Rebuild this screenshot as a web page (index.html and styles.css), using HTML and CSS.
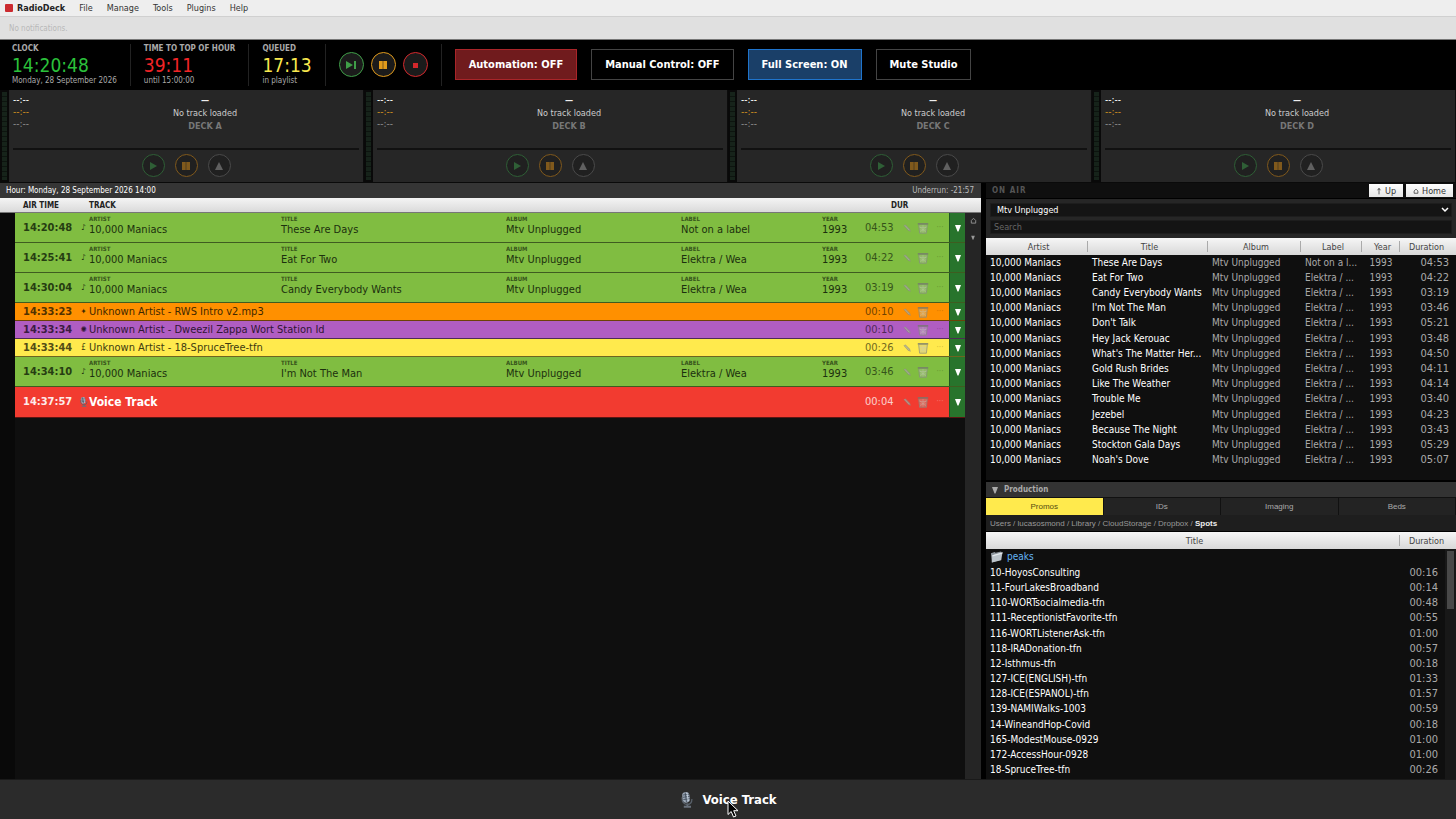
FILE: index.html
```html
<!DOCTYPE html>
<html lang="en">
<head>
<meta charset="utf-8">
<title>RadioDeck</title>
<meta name="viewport" content="width=device-width, initial-scale=1">
<link rel="stylesheet" href="styles.css">
</head>
<body>
<svg class="sprite" aria-hidden="true">
  <defs>
    <symbol id="i-next" viewBox="0 0 12 12"><path d="M1 2l7 4-7 4zM9 2h2v8H9z" fill="currentColor"/></symbol>
    <symbol id="i-play" viewBox="0 0 12 12"><path d="M3 2l7 4-7 4z" fill="currentColor"/></symbol>
    <symbol id="i-pause" viewBox="0 0 12 12"><path d="M2 2h8v8H2z" fill="currentColor" opacity=".75"/><path d="M2 2h3v8H2zM7 2h3v8H7z" fill="currentColor"/></symbol>
    <symbol id="i-stop" viewBox="0 0 12 12"><path d="M4 4h5v5H4z" fill="currentColor"/></symbol>
    <symbol id="i-eject" viewBox="0 0 12 12"><path d="M6 2l4 8H2z" fill="currentColor"/></symbol>
    <symbol id="i-down" viewBox="0 0 8 8"><path d="M1 1h6L4.500 7.500h-1z" fill="currentColor"/></symbol>
    <symbol id="i-pencil" viewBox="0 0 12 12"><path d="M2.500 3.500l2-1 4.500 4.500.8 2.700-2.600-.9z" fill="#8b8d84"/><path d="M3.800 3.300l4.700 5" stroke="#c0c2b8" stroke-width=".8"/></symbol>
    <symbol id="i-trash" viewBox="0 0 12 12"><path d="M1.500 2h9l-1 9.500h-7z" fill="#b4b8ac" opacity=".45"/><path d="M.8 1h10.400v1.800H.8z" fill="#74786f"/><path d="M2 4l8 7M10 4l-8 7M6 3v8M2 5.500h8M2.400 8h7.200" stroke="#c4c8bb" stroke-width=".5" fill="none"/><path d="M1.700 2.800l.9 8.400h6.800l.9-8.400" stroke="#868a80" stroke-width=".9" fill="none"/></symbol>
    <symbol id="i-mic" viewBox="0 0 16 20"><path d="M5 17.500h8M9 14v4" stroke="#68707b" stroke-width="2"/><path d="M3 7c0 6 2 8 6 8s5-2 5-6" fill="none" stroke="#59616b" stroke-width="1.400"/><rect x="3.500" y="1" width="8" height="12" rx="4" fill="#9ba7b6" transform="rotate(-8 7.500 7)"/><path d="M4 4.500l7-1M4 7l7.500-1M4.500 9.500l7.500-1M6.500 1.500l1.500 11" stroke="#3c4654" stroke-width=".9"/><path d="M8.500 2l1.500 9" stroke="#dce8f4" stroke-width=".8"/></symbol>
    <symbol id="i-folder" viewBox="0 0 14 12"><path d="M1 2l4-1.500 1 1 6-1.500v9L2 12z" fill="#8d959d"/><path d="M2.500 4l11-3L12 9.500 2 12z" fill="#bcc4cb"/><path d="M2.500 4l11-3-.3 1.500L2.500 5.500z" fill="#e4e9ed"/></symbol>
    <symbol id="i-home" viewBox="0 0 8 8"><path d="M1.500 7V4L4 1.500 6.500 4v3z" fill="none" stroke="currentColor"/></symbol>
    <symbol id="i-up" viewBox="0 0 8 10"><path d="M4 9.500V1.500M2 4l2-2.500L6 4" fill="none" stroke="currentColor"/></symbol>
  </defs>
</svg>

<div class="app">
  <nav class="menubar" aria-label="Application menu">
    <span class="logo"></span>
    <button class="menu brand">RadioDeck</button>
    <button class="menu">File</button>
    <button class="menu">Manage</button>
    <button class="menu">Tools</button>
    <button class="menu">Plugins</button>
    <button class="menu">Help</button>
  </nav>
  <div class="notice">No notifications.</div>

  <header class="console">
    <div class="stat clock"><span class="stat-label">CLOCK</span><span class="stat-value green">14:20:48</span><span class="stat-note">Monday, 28 September 2026</span></div>
    <div class="stat"><span class="stat-label">TIME TO TOP OF HOUR</span><span class="stat-value red">39:11</span><span class="stat-note">until 15:00:00</span></div>
    <div class="stat"><span class="stat-label">QUEUED</span><span class="stat-value yellow">17:13</span><span class="stat-note">in playlist</span></div>
    <div class="transport">
      <button class="round go" aria-label="Play next"><svg><use href="#i-next"/></svg></button>
      <button class="round hold" aria-label="Pause"><svg><use href="#i-pause"/></svg></button>
      <button class="round halt" aria-label="Stop"><svg><use href="#i-stop"/></svg></button>
    </div>
    <div class="modes">
      <button class="mode mode-red">Automation: OFF</button>
      <button class="mode">Manual Control: OFF</button>
      <button class="mode mode-blue">Full Screen: ON</button>
      <button class="mode">Mute Studio</button>
    </div>
  </header>

  <section class="decks" aria-label="Decks">
    <article class="deck">
      <div class="meter"></div>
      <div class="deck-body">
        <div class="deck-info"><div class="times"><span>--:--</span><span class="amber">--:--</span><span class="dim">--:--</span></div><div class="loaded"><b>—</b><span>No track loaded</span><strong>DECK A</strong></div></div>
        <div class="progress"></div>
        <div class="deck-buttons"><button class="round go" aria-label="Play deck A"><svg><use href="#i-play"/></svg></button><button class="round hold" aria-label="Pause deck A"><svg><use href="#i-pause"/></svg></button><button class="round eject" aria-label="Eject deck A"><svg><use href="#i-eject"/></svg></button></div>
      </div>
    </article>
    <article class="deck">
      <div class="meter"></div>
      <div class="deck-body">
        <div class="deck-info"><div class="times"><span>--:--</span><span class="amber">--:--</span><span class="dim">--:--</span></div><div class="loaded"><b>—</b><span>No track loaded</span><strong>DECK B</strong></div></div>
        <div class="progress"></div>
        <div class="deck-buttons"><button class="round go" aria-label="Play deck B"><svg><use href="#i-play"/></svg></button><button class="round hold" aria-label="Pause deck B"><svg><use href="#i-pause"/></svg></button><button class="round eject" aria-label="Eject deck B"><svg><use href="#i-eject"/></svg></button></div>
      </div>
    </article>
    <article class="deck">
      <div class="meter"></div>
      <div class="deck-body">
        <div class="deck-info"><div class="times"><span>--:--</span><span class="amber">--:--</span><span class="dim">--:--</span></div><div class="loaded"><b>—</b><span>No track loaded</span><strong>DECK C</strong></div></div>
        <div class="progress"></div>
        <div class="deck-buttons"><button class="round go" aria-label="Play deck C"><svg><use href="#i-play"/></svg></button><button class="round hold" aria-label="Pause deck C"><svg><use href="#i-pause"/></svg></button><button class="round eject" aria-label="Eject deck C"><svg><use href="#i-eject"/></svg></button></div>
      </div>
    </article>
    <article class="deck">
      <div class="meter"></div>
      <div class="deck-body">
        <div class="deck-info"><div class="times"><span>--:--</span><span class="amber">--:--</span><span class="dim">--:--</span></div><div class="loaded"><b>—</b><span>No track loaded</span><strong>DECK D</strong></div></div>
        <div class="progress"></div>
        <div class="deck-buttons"><button class="round go" aria-label="Play deck D"><svg><use href="#i-play"/></svg></button><button class="round hold" aria-label="Pause deck D"><svg><use href="#i-pause"/></svg></button><button class="round eject" aria-label="Eject deck D"><svg><use href="#i-eject"/></svg></button></div>
      </div>
    </article>
  </section>

  <main class="workspace">
    <section class="queue" aria-label="Playlist">
      <div class="hour"><span>Hour: Monday, 28 September 2026 14:00</span><span class="underrun">Underrun: -21:57</span></div>
      <div class="queue-head"><span class="h-time">AIR TIME</span><span class="h-track">TRACK</span><span class="h-dur">DUR</span></div>
      <div class="queue-body">
        <div class="rows">
          <div class="row song"><div class="cells"><span class="at">14:20:48</span><span class="kind">♪</span><span class="fact"><small>ARTIST</small>10,000 Maniacs</span><span class="fact"><small>TITLE</small>These Are Days</span><span class="fact"><small>ALBUM</small>Mtv Unplugged</span><span class="fact"><small>LABEL</small>Not on a label</span><span class="fact"><small>YEAR</small>1993</span><span class="dur">04:53</span><button class="tool" aria-label="Edit"><svg><use href="#i-pencil"/></svg></button><button class="tool" aria-label="Delete"><svg><use href="#i-trash"/></svg></button><button class="tool" aria-label="More">···</button></div><button class="drop" aria-label="Options"><svg><use href="#i-down"/></svg></button></div>
          <div class="row song"><div class="cells"><span class="at">14:25:41</span><span class="kind">♪</span><span class="fact"><small>ARTIST</small>10,000 Maniacs</span><span class="fact"><small>TITLE</small>Eat For Two</span><span class="fact"><small>ALBUM</small>Mtv Unplugged</span><span class="fact"><small>LABEL</small>Elektra / Wea</span><span class="fact"><small>YEAR</small>1993</span><span class="dur">04:22</span><button class="tool" aria-label="Edit"><svg><use href="#i-pencil"/></svg></button><button class="tool" aria-label="Delete"><svg><use href="#i-trash"/></svg></button><button class="tool" aria-label="More">···</button></div><button class="drop" aria-label="Options"><svg><use href="#i-down"/></svg></button></div>
          <div class="row song"><div class="cells"><span class="at">14:30:04</span><span class="kind">♪</span><span class="fact"><small>ARTIST</small>10,000 Maniacs</span><span class="fact"><small>TITLE</small>Candy Everybody Wants</span><span class="fact"><small>ALBUM</small>Mtv Unplugged</span><span class="fact"><small>LABEL</small>Elektra / Wea</span><span class="fact"><small>YEAR</small>1993</span><span class="dur">03:19</span><button class="tool" aria-label="Edit"><svg><use href="#i-pencil"/></svg></button><button class="tool" aria-label="Delete"><svg><use href="#i-trash"/></svg></button><button class="tool" aria-label="More">···</button></div><button class="drop" aria-label="Options"><svg><use href="#i-down"/></svg></button></div>
          <div class="row short imaging"><div class="cells"><span class="at">14:33:23</span><span class="kind">✦</span><span class="wide">Unknown Artist - RWS Intro v2.mp3</span><span class="dur">00:10</span><button class="tool" aria-label="Edit"><svg><use href="#i-pencil"/></svg></button><button class="tool" aria-label="Delete"><svg><use href="#i-trash"/></svg></button><button class="tool" aria-label="More">···</button></div><button class="drop" aria-label="Options"><svg><use href="#i-down"/></svg></button></div>
          <div class="row short ident"><div class="cells"><span class="at">14:33:34</span><span class="kind">✺</span><span class="wide">Unknown Artist - Dweezil Zappa Wort Station Id</span><span class="dur">00:10</span><button class="tool" aria-label="Edit"><svg><use href="#i-pencil"/></svg></button><button class="tool" aria-label="Delete"><svg><use href="#i-trash"/></svg></button><button class="tool" aria-label="More">···</button></div><button class="drop" aria-label="Options"><svg><use href="#i-down"/></svg></button></div>
          <div class="row short promo"><div class="cells"><span class="at">14:33:44</span><span class="kind">£</span><span class="wide">Unknown Artist - 18-SpruceTree-tfn</span><span class="dur">00:26</span><button class="tool" aria-label="Edit"><svg><use href="#i-pencil"/></svg></button><button class="tool" aria-label="Delete"><svg><use href="#i-trash"/></svg></button><button class="tool" aria-label="More">···</button></div><button class="drop" aria-label="Options"><svg><use href="#i-down"/></svg></button></div>
          <div class="row song"><div class="cells"><span class="at">14:34:10</span><span class="kind">♪</span><span class="fact"><small>ARTIST</small>10,000 Maniacs</span><span class="fact"><small>TITLE</small>I'm Not The Man</span><span class="fact"><small>ALBUM</small>Mtv Unplugged</span><span class="fact"><small>LABEL</small>Elektra / Wea</span><span class="fact"><small>YEAR</small>1993</span><span class="dur">03:46</span><button class="tool" aria-label="Edit"><svg><use href="#i-pencil"/></svg></button><button class="tool" aria-label="Delete"><svg><use href="#i-trash"/></svg></button><button class="tool" aria-label="More">···</button></div><button class="drop" aria-label="Options"><svg><use href="#i-down"/></svg></button></div>
          <div class="row voice"><div class="cells"><span class="at">14:37:57</span><span class="kind"><svg><use href="#i-mic"/></svg></span><span class="wide">Voice Track</span><span class="dur">00:04</span><button class="tool" aria-label="Edit"><svg><use href="#i-pencil"/></svg></button><button class="tool" aria-label="Delete"><svg><use href="#i-trash"/></svg></button><button class="tool" aria-label="More">···</button></div><button class="drop" aria-label="Options"><svg><use href="#i-down"/></svg></button></div>
        </div>
        <div class="side-rail"><button aria-label="Lock"><svg><use href="#i-home"/></svg></button><button aria-label="Scroll down"><svg><use href="#i-down"/></svg></button></div>
      </div>
    </section>

    <aside class="library">
      <div class="library-head"><h2>ON AIR</h2><button class="nav-button"><svg><use href="#i-up"/></svg>Up</button><button class="nav-button"><svg><use href="#i-home"/></svg>Home</button></div>
      <div class="filters">
        <select aria-label="Album"><option>Mtv Unplugged</option></select>
        <input type="text" placeholder="Search" aria-label="Search">
      </div>
      <div class="tracks-box">
        <table class="tracks">
          <colgroup><col class="c-artist"><col class="c-title"><col class="c-album"><col class="c-label"><col class="c-year"><col class="c-duration"></colgroup>
          <thead><tr><th>Artist</th><th>Title</th><th>Album</th><th>Label</th><th>Year</th><th>Duration</th></tr></thead>
          <tbody>
            <tr><td>10,000 Maniacs</td><td>These Are Days</td><td>Mtv Unplugged</td><td>Not on a l...</td><td>1993</td><td>04:53</td></tr>
            <tr><td>10,000 Maniacs</td><td>Eat For Two</td><td>Mtv Unplugged</td><td>Elektra / ...</td><td>1993</td><td>04:22</td></tr>
            <tr><td>10,000 Maniacs</td><td>Candy Everybody Wants</td><td>Mtv Unplugged</td><td>Elektra / ...</td><td>1993</td><td>03:19</td></tr>
            <tr><td>10,000 Maniacs</td><td>I'm Not The Man</td><td>Mtv Unplugged</td><td>Elektra / ...</td><td>1993</td><td>03:46</td></tr>
            <tr><td>10,000 Maniacs</td><td>Don't Talk</td><td>Mtv Unplugged</td><td>Elektra / ...</td><td>1993</td><td>05:21</td></tr>
            <tr><td>10,000 Maniacs</td><td>Hey Jack Kerouac</td><td>Mtv Unplugged</td><td>Elektra / ...</td><td>1993</td><td>03:48</td></tr>
            <tr><td>10,000 Maniacs</td><td>What's The Matter Her...</td><td>Mtv Unplugged</td><td>Elektra / ...</td><td>1993</td><td>04:50</td></tr>
            <tr><td>10,000 Maniacs</td><td>Gold Rush Brides</td><td>Mtv Unplugged</td><td>Elektra / ...</td><td>1993</td><td>04:11</td></tr>
            <tr><td>10,000 Maniacs</td><td>Like The Weather</td><td>Mtv Unplugged</td><td>Elektra / ...</td><td>1993</td><td>04:14</td></tr>
            <tr><td>10,000 Maniacs</td><td>Trouble Me</td><td>Mtv Unplugged</td><td>Elektra / ...</td><td>1993</td><td>03:40</td></tr>
            <tr><td>10,000 Maniacs</td><td>Jezebel</td><td>Mtv Unplugged</td><td>Elektra / ...</td><td>1993</td><td>04:23</td></tr>
            <tr><td>10,000 Maniacs</td><td>Because The Night</td><td>Mtv Unplugged</td><td>Elektra / ...</td><td>1993</td><td>03:43</td></tr>
            <tr><td>10,000 Maniacs</td><td>Stockton Gala Days</td><td>Mtv Unplugged</td><td>Elektra / ...</td><td>1993</td><td>05:29</td></tr>
            <tr><td>10,000 Maniacs</td><td>Noah's Dove</td><td>Mtv Unplugged</td><td>Elektra / ...</td><td>1993</td><td>05:07</td></tr>
          </tbody>
        </table>
      </div>

      <section class="production">
        <button class="production-head"><svg><use href="#i-down"/></svg>Production</button>
        <div class="tabs" role="tablist"><button role="tab" aria-selected="true" class="tab active">Promos</button><button role="tab" class="tab">IDs</button><button role="tab" class="tab">Imaging</button><button role="tab" class="tab">Beds</button></div>
        <div class="crumbs">Users / lucasosmond / Library / CloudStorage / Dropbox / <b>Spots</b></div>
        <div class="spots-box">
          <table class="spots">
            <colgroup><col><col class="c-duration"></colgroup>
            <thead><tr><th>Title</th><th>Duration</th></tr></thead>
            <tbody>
              <tr><td class="folder"><svg><use href="#i-folder"/></svg>peaks</td><td></td></tr>
              <tr><td>10-HoyosConsulting</td><td>00:16</td></tr>
              <tr><td>11-FourLakesBroadband</td><td>00:14</td></tr>
              <tr><td>110-WORTsocialmedia-tfn</td><td>00:48</td></tr>
              <tr><td>111-ReceptionistFavorite-tfn</td><td>00:55</td></tr>
              <tr><td>116-WORTListenerAsk-tfn</td><td>01:00</td></tr>
              <tr><td>118-IRADonation-tfn</td><td>00:57</td></tr>
              <tr><td>12-Isthmus-tfn</td><td>00:18</td></tr>
              <tr><td>127-ICE(ENGLISH)-tfn</td><td>01:33</td></tr>
              <tr><td>128-ICE(ESPANOL)-tfn</td><td>01:57</td></tr>
              <tr><td>139-NAMIWalks-1003</td><td>00:59</td></tr>
              <tr><td>14-WineandHop-Covid</td><td>00:18</td></tr>
              <tr><td>165-ModestMouse-0929</td><td>01:00</td></tr>
              <tr><td>172-AccessHour-0928</td><td>01:00</td></tr>
              <tr><td>18-SpruceTree-tfn</td><td>00:26</td></tr>
            </tbody>
          </table>
          <div class="scroll"><div class="thumb"></div></div>
        </div>
      </section>
    </aside>
  </main>

  <footer class="voice-bar"><button class="voice-button"><svg class="mic"><use href="#i-mic"/></svg>Voice Track<svg class="pointer" viewBox="0 0 12 18"><path d="M1 1v13.500l3.200-3 2.300 5.500 2.500-1-2.300-5.300H11z" fill="#000" stroke="#fff"/></svg></button></footer>
</div>
</body>
</html>
```
FILE: styles.css
```css
* { box-sizing: border-box; }

body {
  margin: 0;
  background: #0d0d0d;
  color: #fff;
  font-family: "DejaVu Sans Condensed", "Noto Sans", sans-serif;
  font-size: 11px;
  line-height: 12px;
}

button, input, select {
  margin: 0;
  padding: 0;
  border: 0;
  border-radius: 0;
  background: none;
  color: inherit;
  font: inherit;
}

svg { display: block; flex: none; }
.sprite { position: absolute; width: 0; height: 0; }

.app { display: flex; flex-direction: column; height: 100vh; overflow: hidden; }

/* Menu and notices */
.menubar {
  display: flex;
  align-items: center;
  height: 17px;
  padding-left: 5px;
  border-bottom: 1px solid #d0d0d0;
  background: #eee;
  color: #333;
  font-size: 9px;
}
.logo { width: 8px; height: 8px; margin-right: 4px; border-radius: 1px; background: #cb2a2f; }
.menu { margin-right: 14px; }
.brand { font-weight: bold; color: #222; }
.notice {
  height: 23px;
  padding: 6px 9px;
  border-bottom: 1px solid #777;
  background: #e0e0e0;
  color: #b8b8b8;
  font-size: 8px;
  line-height: 11px;
}

/* Console */
.console { display: flex; align-items: center; height: 50px; padding-bottom: 1px; background: #000; }
.stat {
  display: flex;
  flex-direction: column;
  height: 42px;
  padding: 0 13px;
  border-right: 1px solid #222;
}
.clock { padding-left: 12px; }
.stat-label { color: #aaa; font-size: 8px; font-weight: bold; line-height: 10px; }
.stat-value { font-size: 19px; line-height: 22px; }
.stat-note { color: #aaa; font-size: 8px; line-height: 10px; }
.green { color: #2bc13b; }
.red { color: #f02427; }
.yellow { color: #f8e84e; }
.transport {
  display: flex;
  align-items: center;
  gap: 7px;
  height: 42px;
  padding: 0 13px;
  border-right: 1px solid #222;
}
.round {
  display: flex;
  align-items: center;
  justify-content: center;
  width: 25px;
  height: 25px;
  border: 1px solid;
  border-radius: 50%;
  background: #1b1b1b;
}
.round svg { width: 12px; height: 12px; }
.go { color: #3f9e48; }
.hold { color: #e09a1b; }
.halt { color: #d4282c; }
.modes { display: flex; gap: 14px; padding-left: 13px; }
.mode {
  height: 31px;
  padding: 0 13px;
  border: 1px solid #444;
  background: #000;
  font-weight: bold;
}
.mode-red { border-color: #a92529; background: #701b1d; }
.mode-blue { border-color: #1f74cc; background: #1a3f68; }

/* Decks */
.decks {
  display: grid;
  grid-template-columns: repeat(4, 1fr);
  height: 92px;
}
.deck { display: flex; background: #262626; }
.meter { width: 9px; padding: 2px 2px; background: #090909; }
.meter::before {
  display: block;
  height: 88px;
  background: repeating-linear-gradient(#16231a 0 4px, #0d140f 4px 5px);
  content: "";
}
.deck-body {
  display: flex;
  flex: 1;
  flex-direction: column;
  padding: 4px 4px 0;
  border-right: 1px solid #0c0c0c;
}
.deck-info { display: flex; gap: 8px; height: 54px; }
.times { display: flex; flex-direction: column; width: 30px; font-size: 10px; }
.amber { color: #c78a20; }
.dim { color: #888; }
.loaded { display: flex; flex: 1; flex-direction: column; align-items: center; color: #ccc; font-size: 9px; line-height: 13px; }
.loaded b { color: #eee; }
.loaded strong { color: #777; }
.progress { height: 2px; background: #111; }
.deck-buttons { display: flex; justify-content: center; gap: 10px; padding-top: 4px; }
.deck .round { width: 23px; height: 23px; background: #202020; }
.deck .go { color: #2f5f36; }
.deck .hold { color: #80591c; }
.deck .eject { color: #606060; border-color: #4a4a4a; }

/* Workspace */
.workspace {
  display: flex;
  flex: 1;
  gap: 5px;
  min-height: 0;
  border-top: 1px solid #0a0a0a;
  background: #000;
}
.queue { display: flex; flex: 1; flex-direction: column; background: #0f0f0f; }
.hour {
  display: flex;
  justify-content: space-between;
  height: 15px;
  padding: 0 7px 0 6px;
  background: #353535;
  font-size: 8px;
  line-height: 15px;
}
.underrun { color: #bbb; }
.queue-head {
  display: grid;
  grid-template-columns: 66px 1fr 58px;
  height: 15px;
  padding: 0 32px 0 23px;
  border-bottom: 1px solid #777;
  background: linear-gradient(#f4f4f4, #dadada);
  color: #222;
  font-size: 8px;
  font-weight: bold;
  line-height: 15px;
}
.queue-body { display: flex; flex: 1; }
.rows { flex: 1; padding-left: 15px; background: linear-gradient(90deg, #090909 15px, #0f0f0f 15px); }
.row { display: flex; height: 30px; border-bottom: 1px solid #3f5c20; color: #1c300e; }
.row.short { height: 18px; }
.row.voice { height: 31px; }
.cells {
  display: grid;
  flex: 1;
  grid-template-columns: 58px 8px 192fr 225fr 175fr 141fr 43px 34px 16px 16px 18px;
  align-items: center;
  padding-left: 8px;
}
.song .cells { background: #80bd41; }
.imaging { color: #3f2800; border-color: #6b4208; }
.imaging .cells { background: #ff9000; }
.ident { color: #2f1634; border-color: #4d2d55; }
.ident .cells { background: #b05dc2; }
.promo { color: #413a0f; border-color: #6d6520; }
.promo .cells { background: #ffea4d; }
.voice { color: #fff; border-color: #5c1512; }
.voice .cells { background: #f23b30; }
.at { font-weight: bold; opacity: .9; }
.kind { display: flex; justify-content: center; padding-right: 3px; font-size: 8px; }
.kind svg { width: 9px; height: 12px; }
.fact { align-self: start; padding-top: 1px; white-space: nowrap; }
.fact small { display: block; font-size: 6px; font-weight: bold; line-height: 10px; opacity: .75; }
.wide { grid-column: 3 / 8; white-space: nowrap; }
.voice .wide { font-size: 12px; font-weight: bold; }
.dur { opacity: .75; }
.tool { display: flex; justify-content: center; font-size: 8px; opacity: .75; }
.tool svg { width: 12px; height: 12px; }
.tool:last-child { opacity: .25; }
.drop {
  display: flex;
  align-items: center;
  justify-content: center;
  width: 16px;
  border-left: 1px solid #1d5523;
  background: #28742c;
  color: #fff;
}
.drop svg { width: 8px; height: 8px; }
.side-rail {
  display: flex;
  flex-direction: column;
  align-items: center;
  gap: 11px;
  width: 16px;
  padding-top: 4px;
  background: #252525;
  color: #999;
}
.side-rail svg { width: 7px; height: 7px; }
.side-rail button:last-child svg { width: 6px; height: 5px; }

/* Library */
.library { display: flex; flex-direction: column; width: 470px; background: #0f0f0f; }
.library-head { display: flex; align-items: center; gap: 3px; height: 16px; padding: 0 3px 0 6px; border-bottom: 1px solid #000; }
.library-head h2 { flex: 1; margin: 0; color: #555; font-size: 8px; letter-spacing: 1px; }
.nav-button {
  display: flex;
  align-items: center;
  gap: 3px;
  height: 13px;
  padding: 0 7px;
  background: linear-gradient(#fff, #e5e5e5);
  color: #333;
  font-size: 9px;
}
.nav-button svg { width: 6px; height: 8px; }
.filters { display: flex; flex-direction: column; gap: 3px; padding: 4px; background: #262626; }
.filters select, .filters input { width: 100%; height: 14px; border: 1px solid #1d1d1d; background: #141414; }
.filters select {
  padding-left: 6px;
  appearance: none;
  background: #141414 url("data:image/svg+xml,%3Csvg xmlns='http://www.w3.org/2000/svg' width='8' height='6'%3E%3Cpath d='M1 1l3 3 3-3' fill='none' stroke='white' stroke-width='1.500'/%3E%3C/svg%3E") no-repeat right 2px center;
  font-size: 9px;
  line-height: 12px;
}
.filters input { padding-left: 3px; font-size: 9px; }
.filters input::placeholder { color: #666; opacity: 1; }

table { width: 100%; border-collapse: collapse; table-layout: fixed; }
th {
  height: 17px;
  padding: 0 0 0 3px;
  background: linear-gradient(#aaa, #aaa) right center / 1px 11px no-repeat, linear-gradient(#f6f6f6, #d8d8d8);
  color: #444;
  font-size: 9px;
  font-weight: normal;
}
th:last-child { padding: 0 3px 0 0; background: linear-gradient(#f6f6f6, #d8d8d8); }
td {
  height: 15px;
  padding: 0 0 0 4px;
  font-size: 10px;
  white-space: nowrap;
}
td:last-child { padding-right: 7px; color: #aaa; font-size: 11px; text-align: right; }
.c-artist { width: 102px; }
.c-title { width: 120px; }
.c-album { width: 93px; }
.c-label { width: 61px; }
.c-year { width: 38px; }
.c-duration { width: 56px; }
.tracks-box { height: 242px; }
.tracks { height: 230px; }
.tracks td:nth-child(n + 3) { color: #aaa; }
.tracks td:nth-child(5) { padding: 0; text-align: center; }

.production { display: flex; flex: 1; flex-direction: column; min-height: 0; border-top: 2px solid #000; }
.production-head {
  display: flex;
  align-items: center;
  gap: 5px;
  height: 15px;
  padding-left: 5px;
  background: #333;
  color: #aaa;
  font-size: 8px;
  font-weight: bold;
}
.production-head svg { width: 8px; height: 8px; }
.tabs { display: grid; grid-template-columns: repeat(4, 1fr); height: 18px; border-top: 1px solid #111; }
.tab {
  border-right: 1px solid #111;
  background: #232323;
  color: #aaa;
  font-family: "Liberation Sans", Arial, sans-serif;
  font-size: 8px;
}
.tab.active { background: #ffea4d; color: #554b10; }
.crumbs {
  height: 17px;
  padding-left: 4px;
  border-bottom: 1px solid #000;
  background: #1e1e1e;
  color: #999;
  font-family: "Liberation Sans", Arial, sans-serif;
  font-size: 8px;
  line-height: 17px;
}
.crumbs b { color: #eee; }
.spots-box { display: flex; flex: 1; min-height: 0; overflow: hidden; position: relative; }
.spots { height: 246px; align-self: flex-start; }
.spots td:last-child { padding-right: 18px; }
.spots .folder { height: 16px; color: #64b5f6; }
.folder svg { display: inline-block; width: 13px; height: 12px; margin-right: 4px; vertical-align: middle; }
.scroll { position: absolute; top: 17px; right: 0; bottom: 0; width: 11px; padding: 2px; background: #181818; }
.thumb { height: 58px; background: #484848; }

/* Voice track bar */
.voice-bar { display: flex; justify-content: center; height: 40px; border-top: 1px solid #1a1a1a; background: #2b2b2b; }
.voice-button { position: relative; display: flex; align-items: center; gap: 8px; font-size: 13px; font-weight: bold; }
.mic { width: 15px; height: 18px; }
.pointer { position: absolute; top: 20px; left: 48px; width: 12px; height: 18px; }
```
